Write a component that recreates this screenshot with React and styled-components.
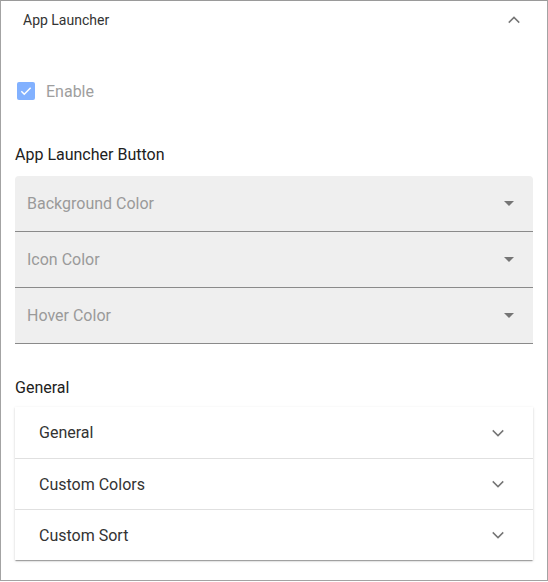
import React from "react";
import styled, { createGlobalStyle } from "styled-components";

const Global = createGlobalStyle`
  html, body { margin: 0; padding: 0; background: #fff; }
  body { font-family: Roboto, "Noto Sans", Arial, sans-serif; }
  * { box-sizing: border-box; }
`;

const Frame = styled.div`
  width: 548px;
  height: 581px;
  border: 1px solid #a3a3a3;
  border-top-color: #9a9a9a;
  background: #fff;
  display: flex;
  flex-direction: column;
`;

const Header = styled.div`
  height: 38px;
  display: flex;
  align-items: center;
  justify-content: space-between;
  padding: 0 24px 0 22px;
  font-size: 14px;
  color: #333;
`;

const Body = styled.div`
  padding: 0 14px 0 14px;
  display: flex;
  flex-direction: column;
`;

const CheckRow = styled.label`
  display: flex;
  align-items: center;
  gap: 11px;
  margin-top: 42px;
  margin-left: 2px;
  height: 20px;
  font-size: 16px;
  color: #9e9e9e;
`;

const Box = styled.span`
  width: 18px;
  height: 18px;
  border-radius: 2px;
  background: #82b1ff;
  display: flex;
  align-items: center;
  justify-content: center;
`;

const SectionTitle = styled.div`
  font-size: 16px;
  color: #212121;
  margin-top: ${(p) => p.$top}px;
  line-height: 20px;
`;

const Fields = styled.div`
  margin-top: 11px;
  display: flex;
  flex-direction: column;
`;

const Field = styled.div`
  height: 56px;
  background: #efefef;
  border-bottom: 1px solid #8a8a8a;
  border-radius: ${(p) => (p.$first ? "4px 4px 0 0" : "0")};
  display: flex;
  align-items: center;
  justify-content: space-between;
  padding: 0 19px 0 12px;
  font-size: 16px;
  color: #9a9a9a;
`;

const Triangle = styled.span`
  width: 0;
  height: 0;
  border-left: 5px solid transparent;
  border-right: 5px solid transparent;
  border-top: 5px solid #757575;
`;

const Panel = styled.div`
  margin-top: 9px;
  background: #fff;
  box-shadow: 0 2px 1px -1px rgba(0, 0, 0, 0.2), 0 1px 1px 0 rgba(0, 0, 0, 0.14),
    0 1px 3px 0 rgba(0, 0, 0, 0.12);
  display: flex;
  flex-direction: column;
`;

const PanelRow = styled.div`
  height: 51px;
  display: flex;
  align-items: center;
  justify-content: space-between;
  padding: 0 26px 0 24px;
  font-size: 16px;
  color: #333;
  border-top: ${(p) => (p.$first ? "none" : "1px solid #e0e0e0")};
`;

const Chevron = ({ up }) => (
  <svg width="18" height="18" viewBox="0 0 24 24" fill="none">
    <path
      d={up ? "M5 15.5l7-7 7 7" : "M5 8.5l7 7 7-7"}
      stroke="#757575"
      strokeWidth="1.9"
    />
  </svg>
);

export default function App() {
  return (
    <>
      <Global />
      <Frame>
        <Header>
          <span>App Launcher</span>
          <Chevron up />
        </Header>
        <Body>
          <CheckRow>
            <Box>
              <svg width="14" height="14" viewBox="0 0 24 24">
                <path d="M4 12.5l5 5L20 6.5" stroke="#fff" strokeWidth="2.6" fill="none" />
              </svg>
            </Box>
            Enable
          </CheckRow>
          <SectionTitle $top={44}>App Launcher Button</SectionTitle>
          <Fields>
            {["Background Color", "Icon Color", "Hover Color"].map((l, i) => (
              <Field key={l} $first={i === 0}>
                <span>{l}</span>
                <Triangle />
              </Field>
            ))}
          </Fields>
          <SectionTitle $top={34}>General</SectionTitle>
          <Panel>
            {["General", "Custom Colors", "Custom Sort"].map((l, i) => (
              <PanelRow key={l} $first={i === 0}>
                <span>{l}</span>
                <Chevron />
              </PanelRow>
            ))}
          </Panel>
        </Body>
      </Frame>
    </>
  );
}
